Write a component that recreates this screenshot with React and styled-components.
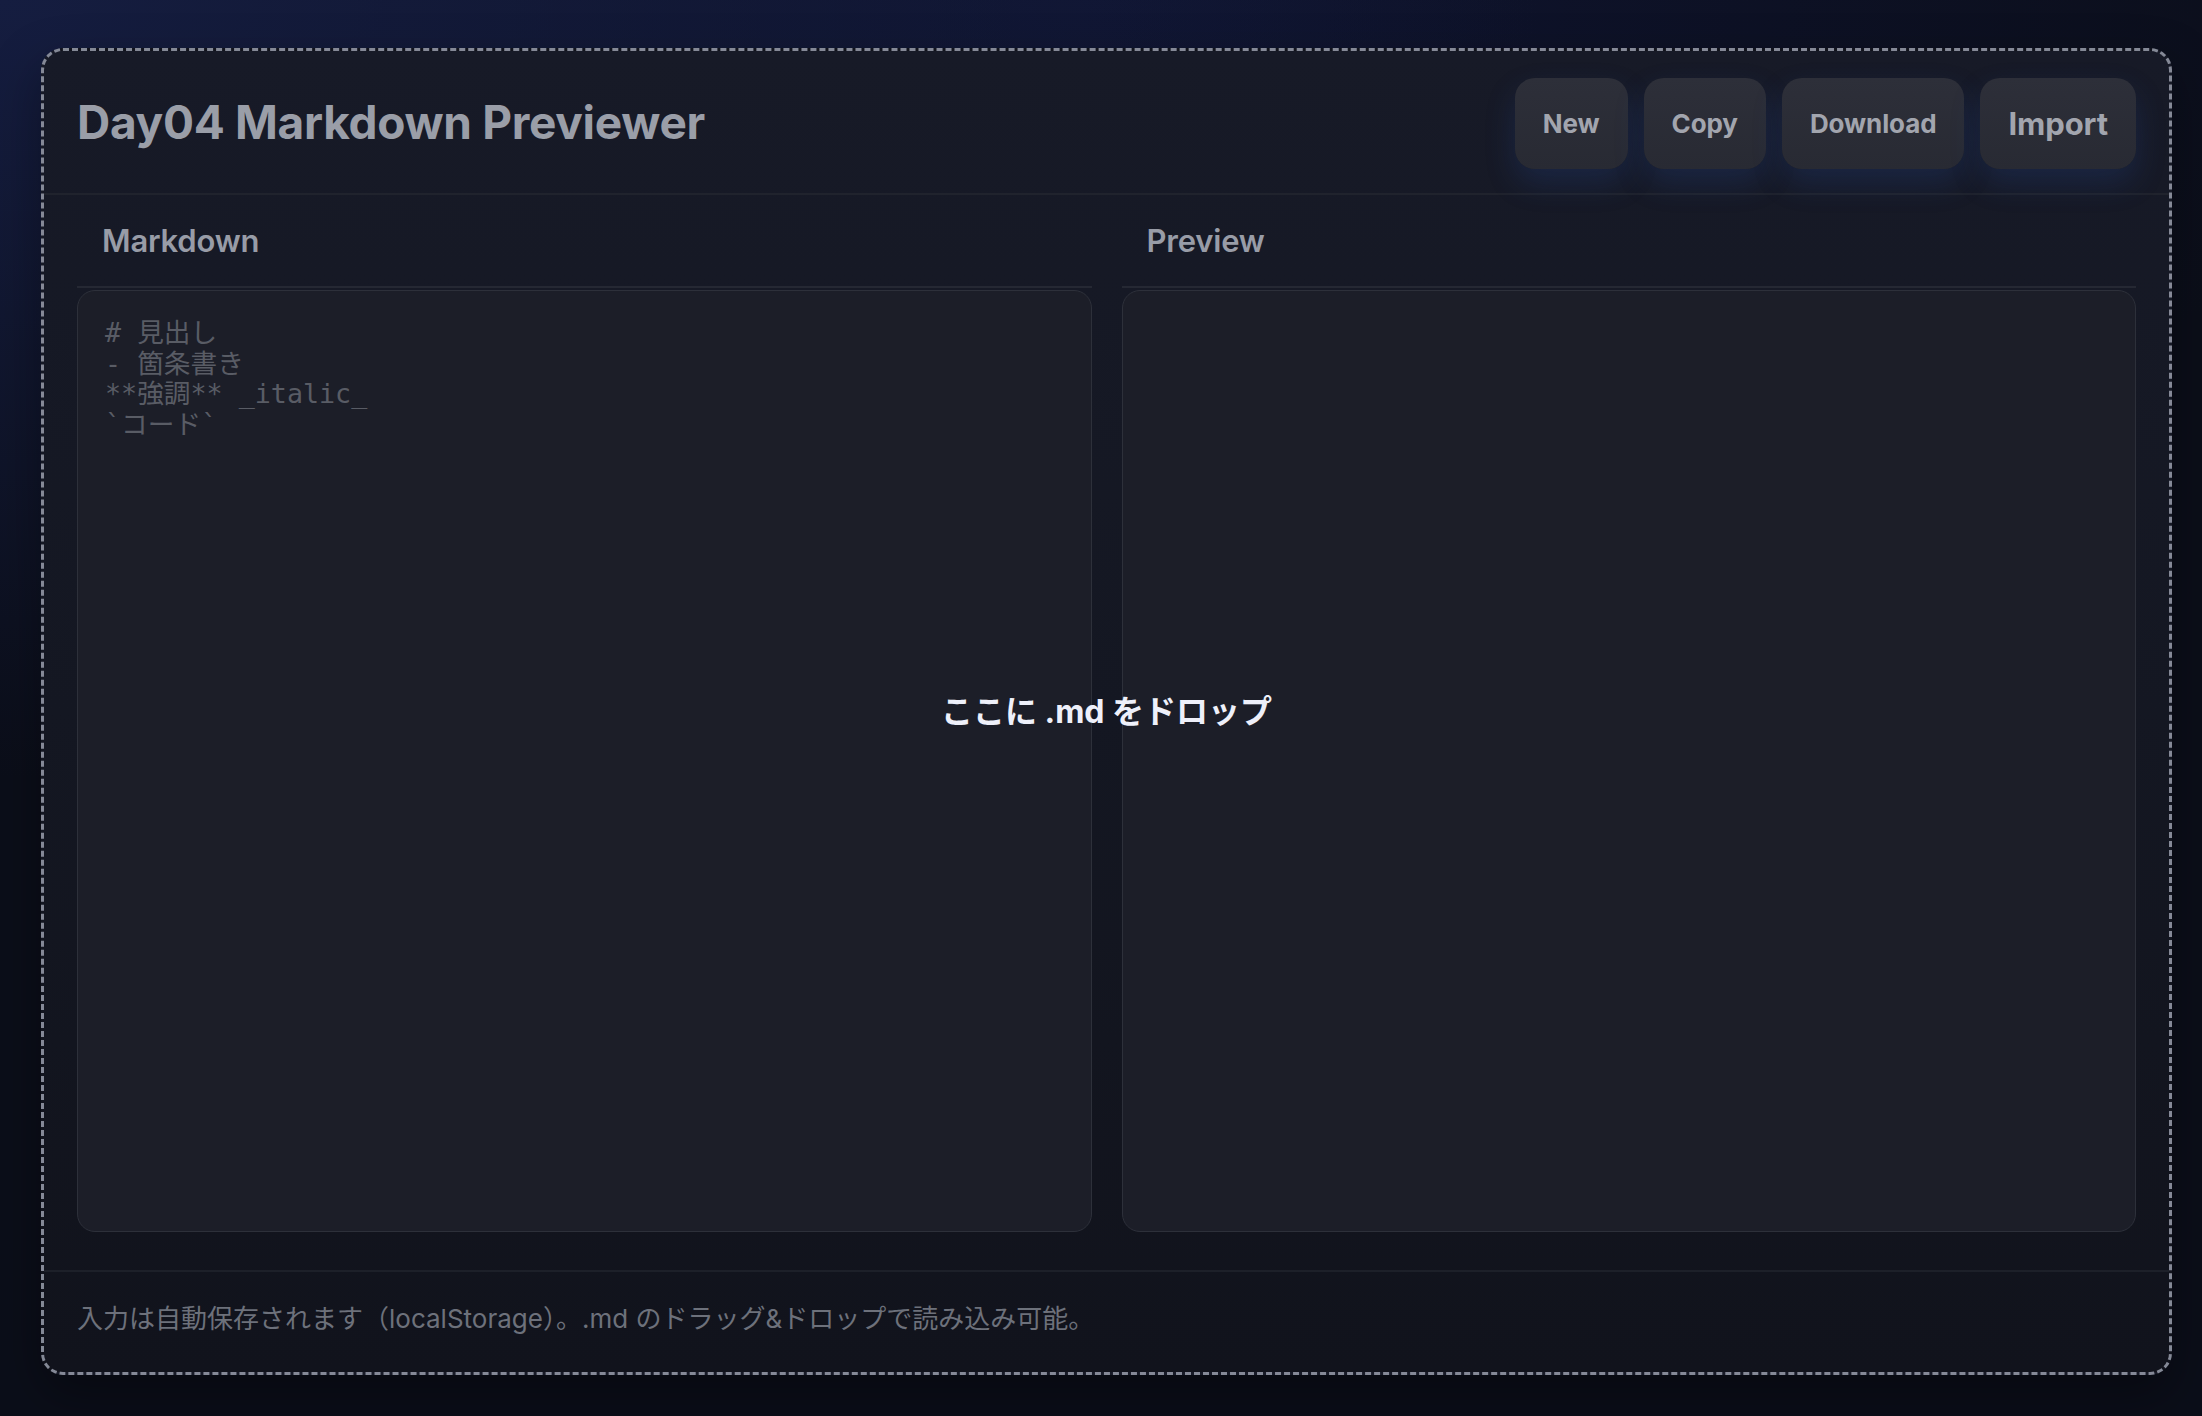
import styled, { createGlobalStyle } from 'styled-components';

const GlobalStyle = createGlobalStyle`
  * {
    box-sizing: border-box;
  }

  html,
  body {
    margin: 0;
    min-height: 100%;
  }

  body {
    font-family: Inter, 'Noto Sans CJK JP', sans-serif;
    background:
      radial-gradient(ellipse 70% 55% at 0% 0%, #151d40 0%, rgba(21, 29, 64, 0) 100%),
      radial-gradient(ellipse 60% 40% at 50% 0%, #0f1430 0%, rgba(15, 20, 48, 0) 100%),
      #0b0e19;
  }
`;

const Page = styled.div`
  padding: 48px 30px 41px 41px;
  height: 1416px;
`;

const Card = styled.div`
  position: relative;
  height: 100%;
  display: flex;
  flex-direction: column;
  border: 3px dashed rgba(140, 144, 158, 0.95);
  border-radius: 22px;
  background: linear-gradient(180deg, #171a27 0%, #141722 50%, #11131c 100%);
  box-shadow: 0 20px 50px rgba(0, 0, 0, 0.35);
  overflow: hidden;
`;

const Header = styled.header`
  height: 144px;
  flex-shrink: 0;
  display: flex;
  align-items: center;
  justify-content: space-between;
  padding: 0 33px;
  border-bottom: 2px solid #20232d;
`;

const Titulo = styled.h1`
  margin: 0;
  font-size: 46px;
  font-weight: 700;
  letter-spacing: -0.3px;
  color: #9a9ea8;
`;

const Toolbar = styled.div`
  display: flex;
  gap: 16px;
  margin-top: 2px;
`;

const Botao = styled.button`
  height: 91px;
  padding: 0 28px;
  border: none;
  border-radius: 20px;
  background: linear-gradient(180deg, #2d2f39 0%, #282a33 100%);
  color: #a2a5ae;
  font-family: Inter, sans-serif;
  font-size: ${({ $big }) => ($big ? '31px' : '26px')};
  font-weight: 700;
  letter-spacing: -0.1px;
  box-shadow: 0 14px 30px rgba(40, 80, 170, 0.22);
  cursor: pointer;
`;

const Main = styled.main`
  flex: 1;
  display: grid;
  grid-template-columns: 1fr 1fr;
  gap: 30px;
  padding: 0 33px 38px;
  min-height: 0;
`;

const Panel = styled.section`
  display: flex;
  flex-direction: column;
  min-height: 0;
`;

const PanelHead = styled.div`
  height: 93px;
  flex-shrink: 0;
  display: flex;
  align-items: center;
  padding: 0 25px;
  border-bottom: 2px solid #252833;
  font-size: 31px;
  font-weight: 600;
  letter-spacing: -0.2px;
  color: #989ca7;
`;

const Caixa = `
  flex: 1;
  margin-top: 2px;
  border: 1.5px solid #2d303a;
  border-radius: 18px;
  background: #1c1e28;
`;

const Editor = styled.textarea`
  ${Caixa}
  width: 100%;
  padding: 27px 27px;
  resize: none;
  outline: none;
  color: #c9ccd4;
  font-family: 'DejaVu Sans Mono', 'Noto Sans CJK JP', monospace;
  font-size: 26.7px;
  line-height: 30.5px;

  &::placeholder {
    color: #595c65;
  }
`;

const Preview = styled.div`
  ${Caixa}
`;

const Rodape = styled.footer`
  height: 102px;
  flex-shrink: 0;
  display: flex;
  align-items: center;
  padding: 0 33px 12px;
  border-top: 2px solid #1d2029;
  font-size: 26px;
  color: #6d717b;
`;

const DropHint = styled.div`
  position: absolute;
  inset: 0 0 6px 0;
  display: flex;
  align-items: center;
  justify-content: center;
  pointer-events: none;
  font-size: 32px;
  font-weight: 700;
  color: #eef0fa;
`;

const App = () => {
  return (
    <>
      <GlobalStyle />
      <Page>
        <Card>
          <Header>
            <Titulo>Day04 Markdown Previewer</Titulo>
            <Toolbar>
              <Botao>New</Botao>
              <Botao>Copy</Botao>
              <Botao>Download</Botao>
              <Botao $big>Import</Botao>
            </Toolbar>
          </Header>
          <Main>
            <Panel>
              <PanelHead>Markdown</PanelHead>
              <Editor
                spellCheck={false}
                placeholder={'# 見出し\n- 箇条書き\n**強調** _italic_\n`コード`'}
              />
            </Panel>
            <Panel>
              <PanelHead>Preview</PanelHead>
              <Preview />
            </Panel>
          </Main>
          <Rodape>
            入力は自動保存されます（localStorage）。.md のドラッグ&ドロップで読み込み可能。
          </Rodape>
          <DropHint>ここに .md をドロップ</DropHint>
        </Card>
      </Page>
    </>
  );
};

export default App;
